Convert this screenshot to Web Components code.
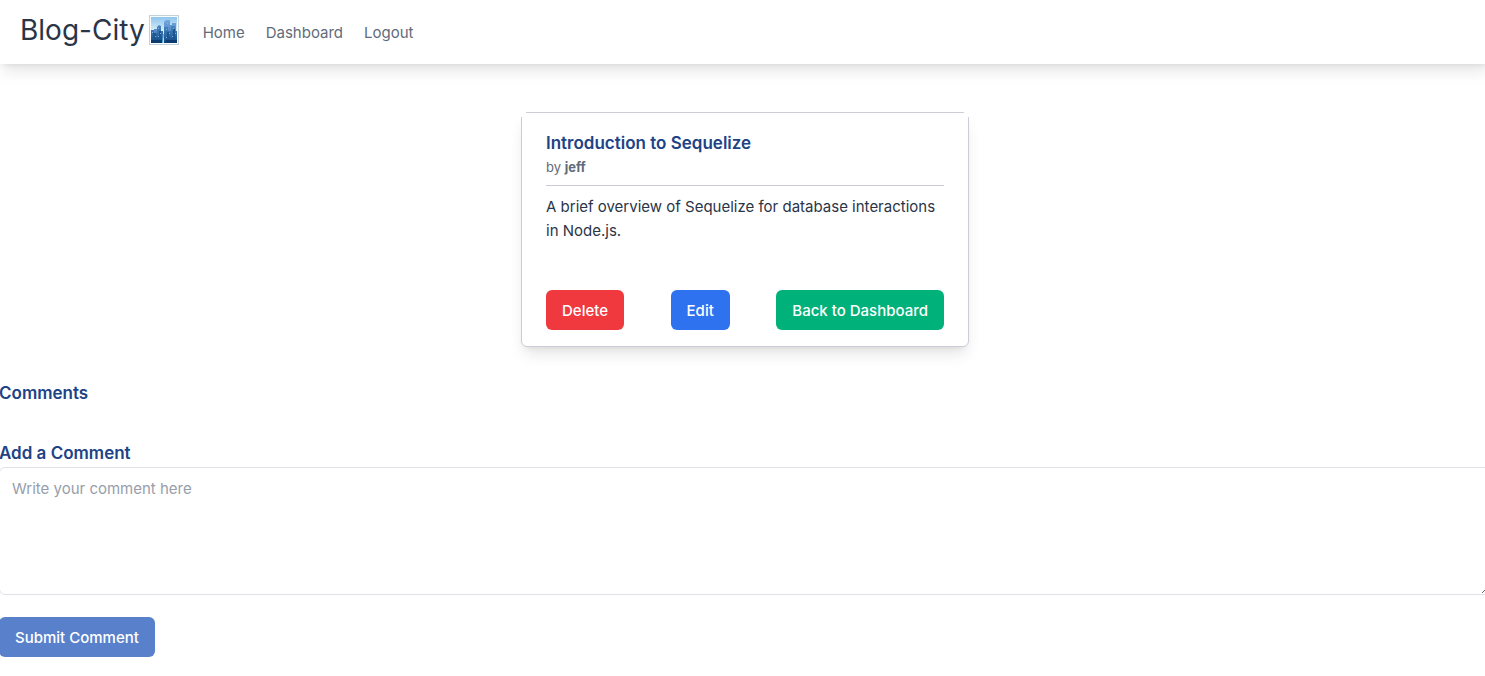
<!DOCTYPE html>
<html lang="en">
<head>
<meta charset="utf-8">
<meta name="viewport" content="width=device-width, initial-scale=1">
<title>Blog-City</title>
<style>
  html { overflow-x: hidden; }
  body { margin: 0 -6px 0 -1px; background: #fff; color: #2a3547; font: 400 15px/24px Inter, "Liberation Sans", sans-serif; }
</style>
</head>
<body>
<blog-nav>
  <nav-link href="#home">Home</nav-link>
  <nav-link href="#dashboard">Dashboard</nav-link>
  <nav-link href="#logout">Logout</nav-link>
</blog-nav>
<main>
  <post-card>
    <span slot="title">Introduction to Sequelize</span>
    <span slot="author">jeff</span>
    A brief overview of Sequelize for database interactions in Node.js.
    <action-button slot="actions" tone="danger">Delete</action-button>
    <action-button slot="actions" tone="primary">Edit</action-button>
    <action-button slot="actions" tone="success">Back to Dashboard</action-button>
  </post-card>
  <comment-section></comment-section>
</main>
<script>
const define = (name, html) => customElements.define(name, class extends HTMLElement {
  constructor() {
    super();
    const t = document.createElement('template');
    t.innerHTML = html;
    this.attachShadow({ mode: 'open' }).append(t.content.cloneNode(true));
  }
  connectedCallback() {
    const a = this.shadowRoot.querySelector('a[data-link]');
    if (a) a.setAttribute('href', this.getAttribute('href'));
  }
});

define('city-icon', `
<style>:host { display: block; width: 30px; height: 30px; } svg { display: block; }</style>
<svg width="30" height="30" viewBox="0 0 30 30" aria-hidden="true">
  <defs>
    <linearGradient id="sky" x2="0" y2="1"><stop stop-color="#8fc5ee"/><stop offset=".55" stop-color="#d8effb"/><stop offset="1" stop-color="#75b5e2"/></linearGradient>
    <linearGradient id="tower" x2="0" y2="1"><stop stop-color="#4d87bf"/><stop offset=".6" stop-color="#2a66a3"/><stop offset="1" stop-color="#123f79"/></linearGradient>
    <linearGradient id="far" x2="0" y2="1"><stop stop-color="#75a9df"/><stop offset="1" stop-color="#2d69ad"/></linearGradient>
  </defs>
  <path fill="#c5d1d8" d="M0 0h30v30H0z"/><path fill="#fafcfc" d="M1 1h28v28H1z"/>
  <path fill="url(#sky)" d="M2 2h26v26H2z"/>
  <path fill="url(#far)" d="M15 7l2-2h4v5h2V8h4v20H15zM5 14h3v14H5z"/>
  <path fill="url(#tower)" d="M2 15h3v3h3v-6l2-2 2 1v5h2v12H2zM15 12h4v4h3v-5h4v5h2v12H15z"/>
  <path fill="#1d568f" d="M4 18h3v10H4zM10 16h2v12h-2zM18 17h2v11h-2zM24 14h2v14h-2z"/>
  <path fill="#7cb3db" d="M3 17h1v1H3zM9 13h1v1H9zM11 18h1v1h-1zM6 21h1v1H6zM17 14h1v1h-1zM20 18h1v1h-1zM24 13h1v1h-1zM26 18h1v1h-1zM23 21h1v1h-1zM17 22h1v1h-1zM9 21h1v1H9zM18 8h1v1h-1z"/>
  <path fill="#0d3971" d="M2 25h11v3H2zM17 25h11v3H17z"/>
  <path fill="#59c4e7" d="M14 19h1v9h-2z"/><path fill="#99e8f7" d="M14 23h1v5h-1z"/>
</svg>`);

define('nav-link', `
<style>:host { display: block; } a { color: #626b7a; text-decoration: none; }</style>
<a data-link><slot></slot></a>`);

define('blog-nav', `
<style>
  :host { display: block; background: #fff; box-shadow: 0 10px 15px -3px rgba(0,0,0,.1), 0 4px 6px -4px rgba(0,0,0,.1); }
  nav { display: flex; align-items: center; box-sizing: border-box; min-height: 64px; padding: 0 21px; }
  .brand { display: flex; align-items: center; gap: 4px; margin: 0 24px 4px 0; color: #2a3547; font-size: 28px; line-height: 36px; text-decoration: none; }
  .links { display: flex; gap: 21px; padding-top: 2px; }
</style>
<nav aria-label="Main"><a class="brand" href="#home">Blog-City<city-icon></city-icon></a><div class="links"><slot></slot></div></nav>`);

define('action-button', `
<style>
  :host { display: inline-block; }
  button { display: block; padding: 9px 16px 7px; border: 0; border-radius: 6px; background: #5981cb; color: #fff; font: inherit; font-weight: 500; line-height: 24px; cursor: pointer; }
  :host([tone=danger]) button { background: #f0383f; }
  :host([tone=primary]) button { background: #2f72f0; }
  :host([tone=success]) button { background: #00b279; }
</style>
<button type="button"><slot></slot></button>`);

define('post-card', `
<style>
  :host { display: block; position: relative; box-sizing: border-box; max-width: 448px; margin: 48px auto 32px; padding: 16px 24px; border: 1px solid #cbced8; border-radius: 6px; background: #fff; box-shadow: 0 10px 15px -3px rgba(0,0,0,.1), 0 4px 6px -4px rgba(0,0,0,.1); }
  /* the border stops short of the two top corners */
  :host::before, :host::after { content: ""; position: absolute; top: -1px; width: 5px; height: 5px; background: #fff; }
  :host::before { left: -1px; }
  :host::after { right: -1px; }
  header { padding-bottom: 8px; border-bottom: 1px solid #c8cbd4; }
  h2 { margin: 0; color: #204386; font-size: 17px; font-weight: 600; line-height: 28px; }
  .by { margin: 0; color: #626b7a; font-size: 13px; line-height: 20px; }
  .by b { font-weight: 700; }
  .body { margin: 9px 0 47px; }
  footer { display: flex; justify-content: space-between; }
</style>
<article>
  <header><h2><slot name="title"></slot></h2><p class="by">by <b><slot name="author"></slot></b></p></header>
  <p class="body"><slot></slot></p>
  <footer><slot name="actions"></slot></footer>
</article>`);

define('comment-section', `
<style>
  :host { display: block; }
  h2, label { display: block; margin: 0; color: #204386; font-size: 17px; font-weight: 600; line-height: 28px; }
  h2 { margin-bottom: 32px; }
  textarea { display: block; box-sizing: border-box; width: 100%; height: 128px; margin: 0 0 22px; padding: 9px 12px; border: 1px solid #e0e2e8; border-radius: 6px; background: #fff; color: #2a3547; font: inherit; resize: vertical; }
  textarea::placeholder { color: #979eaa; }
</style>
<section><h2>Comments</h2>
<form><label for="comment">Add a Comment</label>
<textarea id="comment" placeholder="Write your comment here"></textarea>
<action-button>Submit Comment</action-button></form></section>`);
</script>
</body>
</html>
